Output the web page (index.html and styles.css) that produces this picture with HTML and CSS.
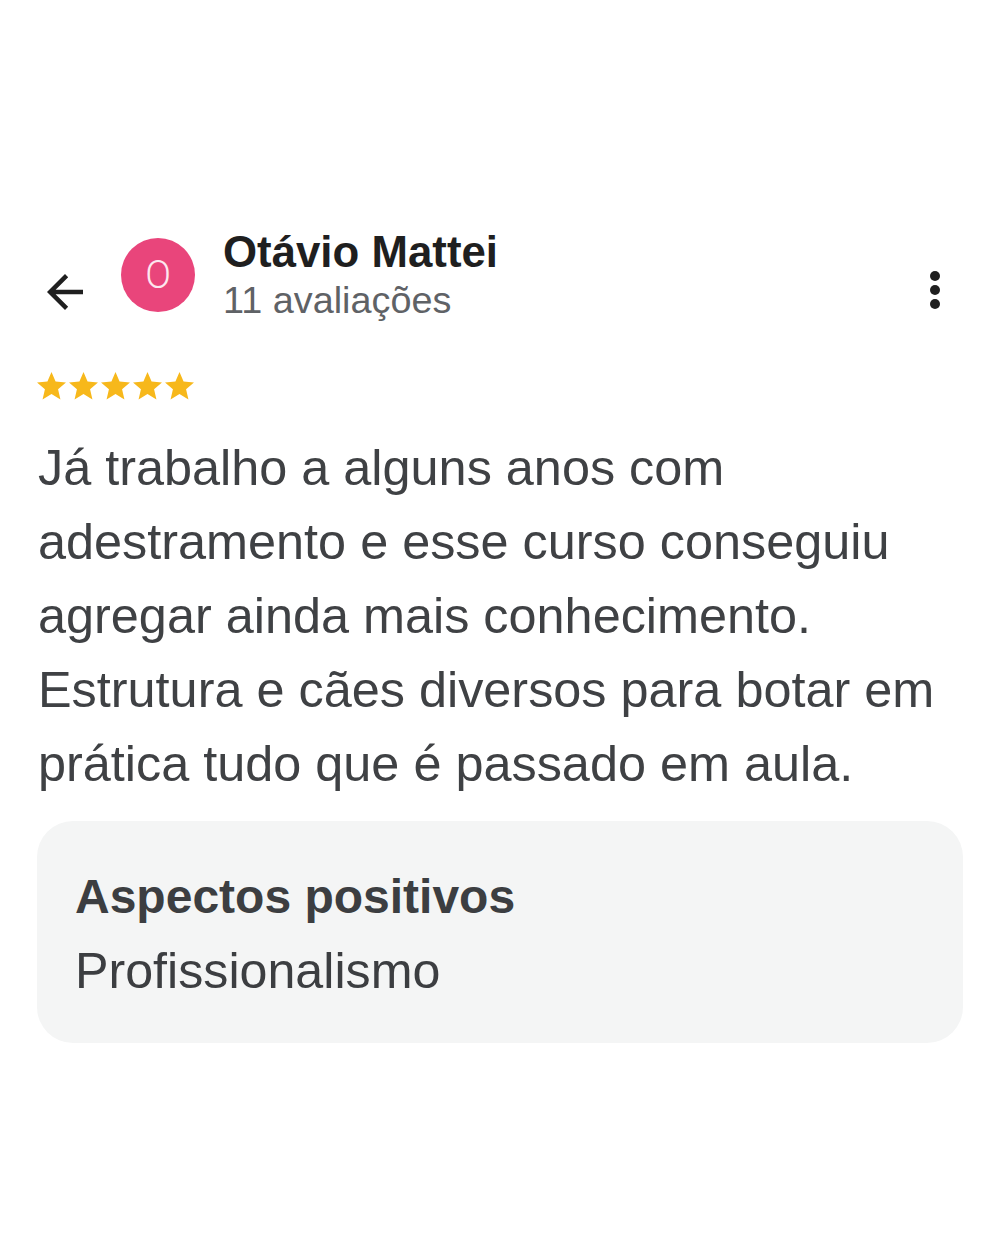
FILE: index.html
```html
<!DOCTYPE html>
<html lang="pt">
<head>
<meta charset="utf-8">
<title>Avaliação</title>
<link rel="stylesheet" href="styles.css">
</head>
<body>
<main class="review">
  <header class="review-header">
    <svg class="back-icon" viewBox="0 0 24 24" aria-hidden="true"><path d="M20 11H7.83l5.59-5.59L12 4l-8 8 8 8 1.41-1.41L7.83 13H20v-2z"/></svg>
    <div class="avatar">O</div>
    <div class="author">
      <div class="author-name">Otávio Mattei</div>
      <div class="author-meta">11 avaliações</div>
    </div>
    <svg class="more-icon" viewBox="0 0 10 38" aria-hidden="true"><circle cx="5" cy="5" r="5"/><circle cx="5" cy="19" r="5"/><circle cx="5" cy="33" r="5"/></svg>
  </header>

  <div class="stars">
    <svg class="star" viewBox="2 2 20 19"><path d="M12 17.27L18.18 21l-1.64-7.03L22 9.24l-7.19-.61L12 2 9.19 8.63 2 9.24l5.46 4.73L5.82 21z"/></svg>
    <svg class="star" viewBox="2 2 20 19"><path d="M12 17.27L18.18 21l-1.64-7.03L22 9.24l-7.19-.61L12 2 9.19 8.63 2 9.24l5.46 4.73L5.82 21z"/></svg>
    <svg class="star" viewBox="2 2 20 19"><path d="M12 17.27L18.18 21l-1.64-7.03L22 9.24l-7.19-.61L12 2 9.19 8.63 2 9.24l5.46 4.73L5.82 21z"/></svg>
    <svg class="star" viewBox="2 2 20 19"><path d="M12 17.27L18.18 21l-1.64-7.03L22 9.24l-7.19-.61L12 2 9.19 8.63 2 9.24l5.46 4.73L5.82 21z"/></svg>
    <svg class="star" viewBox="2 2 20 19"><path d="M12 17.27L18.18 21l-1.64-7.03L22 9.24l-7.19-.61L12 2 9.19 8.63 2 9.24l5.46 4.73L5.82 21z"/></svg>
  </div>

  <p class="review-text">Já trabalho a alguns anos com adestramento e esse curso conseguiu agregar ainda mais conhecimento. Estrutura e cães diversos para botar em prática tudo que é passado em aula.</p>

  <section class="aspects">
    <h2 class="aspects-title">Aspectos positivos</h2>
    <p class="aspects-value">Profissionalismo</p>
  </section>
</main>
</body>
</html>
```

FILE: styles.css
```css
html, body {
  margin: 0;
  padding: 0;
  background: #ffffff;
}

body {
  font-family: "Liberation Sans", Arial, sans-serif;
  width: 1000px;
  height: 1250px;
  overflow: hidden;
}

.review {
  padding-top: 227px;
}

.review-header {
  display: flex;
  align-items: center;
  padding-left: 38px;
  padding-right: 60px;
}

.back-icon {
  width: 54px;
  height: 54px;
  fill: #1f1f1f;
  margin-top: 33px;
  flex: none;
}

.avatar {
  width: 74px;
  height: 74px;
  margin-left: 29px;
  border-radius: 50%;
  background: #e9457b;
  color: #fde7ef;
  font-family: Roboto, "Liberation Sans", sans-serif;
  font-weight: 300;
  font-size: 38px;
  display: flex;
  align-items: center;
  justify-content: center;
  flex: none;
}

.author {
  margin-left: 28px;
  flex: 1;
}

.author-name {
  font-size: 43.8px;
  line-height: 50px;
  font-weight: 700;
  color: #1f1f1f;
}

.author-meta {
  font-size: 37.8px;
  line-height: 46px;
  color: #5f6266;
}

.more-icon {
  width: 10px;
  height: 38px;
  fill: #1f1f1f;
  margin-top: 30px;
  flex: none;
}

.stars {
  display: flex;
  gap: 3px;
  margin: 49px 0 0 37px;
}

.star {
  width: 29px;
  height: 27.5px;
  fill: #f7b81b;
}

.review-text {
  margin: 31px 38px 0 38px;
  font-size: 50.4px;
  line-height: 74px;
  color: #3f4144;
}

.aspects {
  margin: 20px 37px 0 37px;
  padding: 39px 38px 35px 38px;
  background: #f4f5f5;
  border-radius: 36px;
}

.aspects-title {
  margin: 0;
  font-size: 48px;
  line-height: 74px;
  font-weight: 700;
  color: #3c3e41;
}

.aspects-value {
  margin: 0;
  font-size: 50.2px;
  line-height: 74px;
  color: #3c3e41;
}
```
